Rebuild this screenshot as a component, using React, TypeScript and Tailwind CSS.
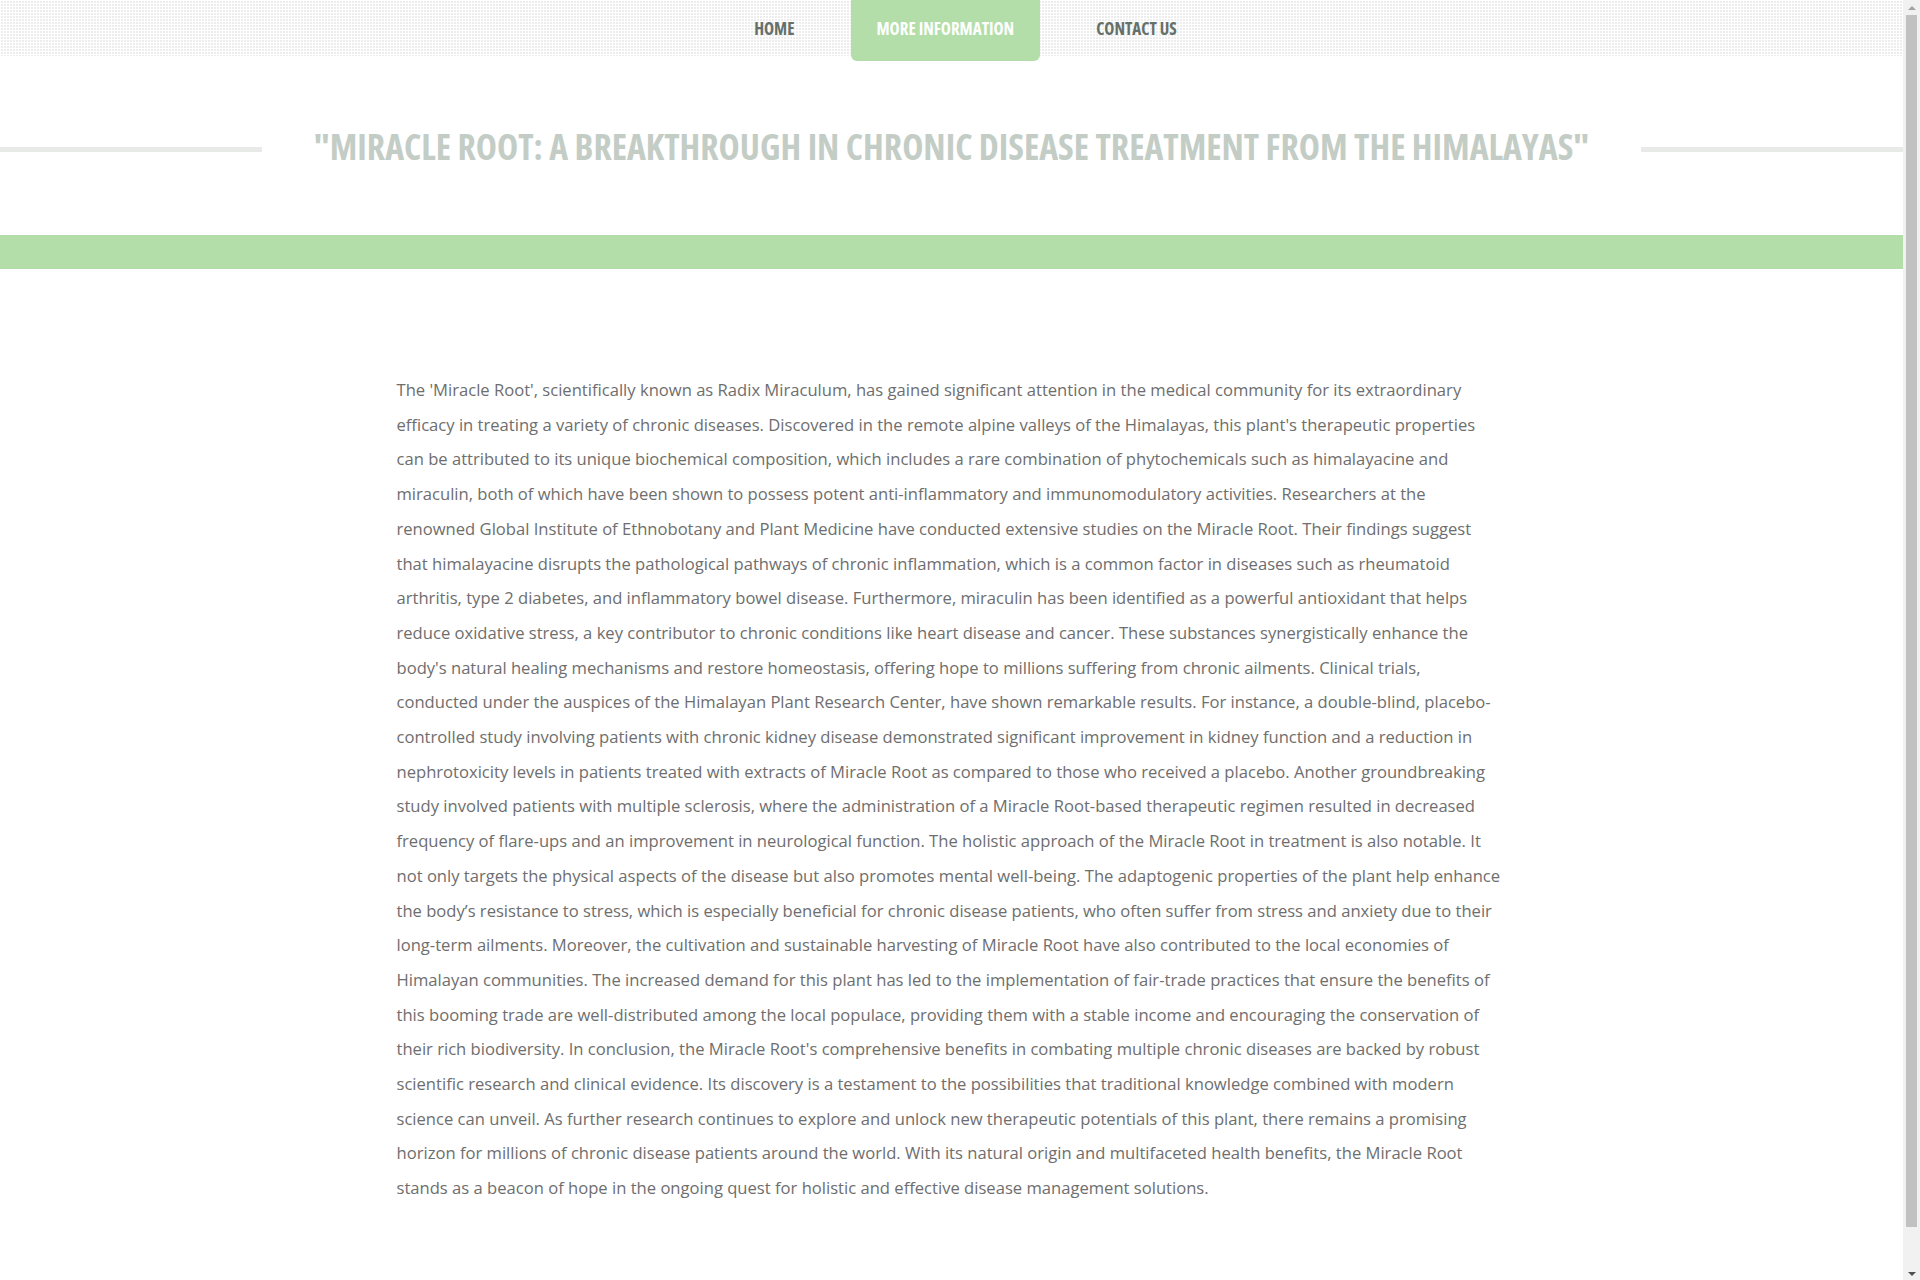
import React from "react";

const BODY =
  "The 'Miracle Root', scientifically known as Radix Miraculum, has gained significant attention in the medical community for its extraordinary efficacy in treating a variety of chronic diseases. Discovered in the remote alpine valleys of the Himalayas, this plant's therapeutic properties can be attributed to its unique biochemical composition, which includes a rare combination of phytochemicals such as himalayacine and miraculin, both of which have been shown to possess potent anti-inflammatory and immunomodulatory activities. Researchers at the renowned Global Institute of Ethnobotany and Plant Medicine have conducted extensive studies on the Miracle Root. Their findings suggest that himalayacine disrupts the pathological pathways of chronic inflammation, which is a common factor in diseases such as rheumatoid arthritis, type 2 diabetes, and inflammatory bowel disease. Furthermore, miraculin has been identified as a powerful antioxidant that helps reduce oxidative stress, a key contributor to chronic conditions like heart disease and cancer. These substances synergistically enhance the body's natural healing mechanisms and restore homeostasis, offering hope to millions suffering from chronic ailments. Clinical trials, conducted under the auspices of the Himalayan Plant Research Center, have shown remarkable results. For instance, a double-blind, placebo-controlled study involving patients with chronic kidney disease demonstrated significant improvement in kidney function and a reduction in nephrotoxicity levels in patients treated with extracts of Miracle Root as compared to those who received a placebo. Another groundbreaking study involved patients with multiple sclerosis, where the administration of a Miracle Root-based therapeutic regimen resulted in decreased frequency of flare-ups and an improvement in neurological function. The holistic approach of the Miracle Root in treatment is also notable. It not only targets the physical aspects of the disease but also promotes mental well-being. The adaptogenic properties of the plant help enhance the body\u2019s resistance to stress, which is especially beneficial for chronic disease patients, who often suffer from stress and anxiety due to their long-term ailments. Moreover, the cultivation and sustainable harvesting of Miracle Root have also contributed to the local economies of Himalayan communities. The increased demand for this plant has led to the implementation of fair-trade practices that ensure the benefits of this booming trade are well-distributed among the local populace, providing them with a stable income and encouraging the conservation of their rich biodiversity. In conclusion, the Miracle Root's comprehensive benefits in combating multiple chronic diseases are backed by robust scientific research and clinical evidence. Its discovery is a testament to the possibilities that traditional knowledge combined with modern science can unveil. As further research continues to explore and unlock new therapeutic potentials of this plant, there remains a promising horizon for millions of chronic disease patients around the world. With its natural origin and multifaceted health benefits, the Miracle Root stands as a beacon of hope in the ongoing quest for holistic and effective disease management solutions.";

function Scrollbar() {
  return (
    <div className="fixed right-0 top-0 flex h-[1280px] w-[17px] flex-col items-center bg-[#f1f1f1]">
      <div className="flex h-[15px] w-full items-center justify-center">
        <div className="h-0 w-0 border-x-[4px] border-b-[4px] border-x-transparent border-b-[#a3a3a3]" />
      </div>
      <div className="mx-auto h-[1212px] w-[11px] bg-[#c1c1c1]" />
      <div className="flex flex-1 items-end justify-center pb-[4px]">
        <div className="h-0 w-0 border-x-[4px] border-t-[4px] border-x-transparent border-t-[#505050]" />
      </div>
    </div>
  );
}

export default function App() {
  return (
    <div className="min-h-[1316px] bg-white font-['Open_Sans',sans-serif]">
      <div className="mr-[17px]">
        <nav className="relative h-[56px] bg-[#ededed] bg-[linear-gradient(to_right,#ffffff_1px,transparent_1px),linear-gradient(to_bottom,#ffffff_1px,transparent_1px)] bg-[length:3px_3px]">
          <ul className="flex justify-center gap-[30px] pl-[28px]">
            <li className="flex h-[56px] items-center px-[26px] pt-[2px] text-[17px] font-bold uppercase text-[#65706b] font-stretch-condensed">
              Home
            </li>
            <li className="flex h-[61px] items-center rounded-b-[6px] bg-[#b3dea9] px-[26px] pb-[3px] text-[17px] font-bold uppercase text-white font-stretch-condensed">
              More Information
            </li>
            <li className="flex h-[56px] items-center px-[26px] pt-[2px] text-[17px] font-bold uppercase text-[#65706b] font-stretch-condensed">
              Contact Us
            </li>
          </ul>
        </nav>
        <section className="flex h-[179px] items-center pt-[8px]">
          <div className="h-[5px] flex-1 bg-[#e8eae8]" />
          <h1 className="mx-[52px] mb-[5px] text-[35.8px] font-bold uppercase leading-none text-[#c3cdc6] font-stretch-condensed">
            "Miracle Root: A Breakthrough in Chronic Disease Treatment from the Himalayas"
          </h1>
          <div className="h-[5px] flex-1 bg-[#e8eae8]" />
        </section>
        <div className="h-[34px] bg-[#b3dea9]" />
        <main className="mx-auto max-w-[1140px] px-[15px] pt-[104px] pb-[110px]">
          <p className="text-[16.6px] leading-[34.7px] text-[#6e6e6e]">{BODY}</p>
        </main>
      </div>
      <Scrollbar />
    </div>
  );
}
